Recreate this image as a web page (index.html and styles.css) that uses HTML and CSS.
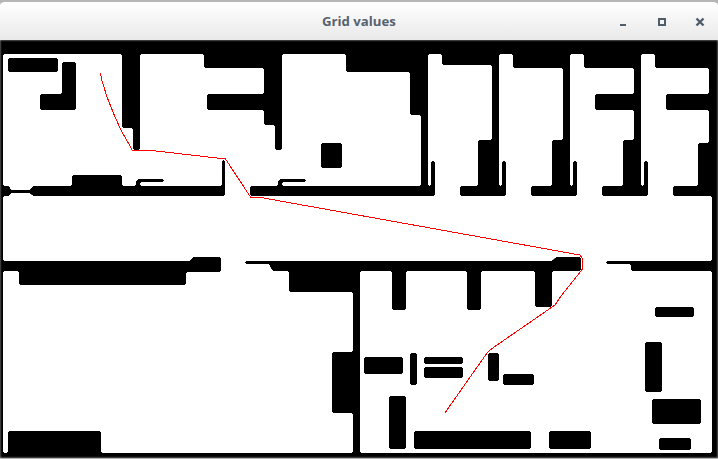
FILE: index.html
```html
<!DOCTYPE html>
<html lang="en">
<head>
<meta charset="utf-8">
<title>Grid values</title>
<link rel="stylesheet" href="styles.css">
</head>
<body>
<main class="window">
  <header class="titlebar">
    <div class="title">Grid values</div>
    <div class="controls">
      <svg class="control" viewBox="0 0 12 12" aria-label="Minimize"><rect x="2" y="8" width="6" height="2"/></svg>
      <svg class="control" viewBox="0 0 12 12" aria-label="Maximize"><path fill-rule="evenodd" d="M2 2h8v8H2zM4 4v4h4V4z"/></svg>
      <svg class="control" viewBox="0 0 12 12" aria-label="Close"><path class="x" d="M2.5 2.5l7 7M9.5 2.5l-7 7"/></svg>
    </div>
  </header>
  <svg class="map" viewBox="0 40 718 418" aria-label="Occupancy grid with path">
    <defs>
      <filter id="soften" x="0" y="0" width="100%" height="100%" color-interpolation-filters="sRGB">
        <feGaussianBlur stdDeviation="1"/>
        <feComponentTransfer>
          <feFuncR type="linear" slope="12" intercept="-5.5"/>
          <feFuncG type="linear" slope="12" intercept="-5.5"/>
          <feFuncB type="linear" slope="12" intercept="-5.5"/>
        </feComponentTransfer>
      </filter>
    </defs>
    <g filter="url(#soften)">
      <rect class="wall" x="0" y="40" width="718" height="418"/>
      <!-- free space -->
      <path class="free" d="M3 54H122V128H133V150H140V54H204V68H264V94H207V110H264V125H275V150H282V54H346V72H410V115H421V186H250V196H225V160H222V186H3Z"/>
      <path class="free" d="M9 186H33L30 190H11ZM11 193H30L33 196H9Z"/>
      <rect class="free" x="3" y="196" width="709" height="65"/>
      <path class="free" d="M428 54H442V65H492V140H478V186H460V196H435V161H431V186H428Z"/>
      <path class="free" d="M499 54H513V68H563V140H552V186H531V196H506V161H502V186H499Z"/>
      <path class="free" d="M570 54H584V68H634V94H595V110H634V140H623V186H602V196H577V161H573V186H570Z"/>
      <path class="free" d="M641 54H655V68H709V94H666V110H709V143H698V186H673V196H648V161H644V186H641Z"/>
      <path class="free" d="M3 271H221V261H245V264H270V268H272V271H289V292H353V352H332V413H353V453H101V431H8V453H3Z"/>
      <path class="free" d="M360 271H581V261H606V264H631V271H712V453H360Z"/>
      <!-- obstacles -->
      <path class="wall" d="M8 58H58V72H8ZM62 62H76V110H40V94H62Z"/>
      <path class="wall" d="M3 186H8L10 191L8 196H3ZM10 190H31V193H10Z"/>
      <rect class="wall" x="72" y="175" width="50" height="12"/>
      <path class="wall" d="M136 186V181L138 179H164V182H140V186Z"/>
      <path class="wall" d="M278 186V181L280 179H306V182H282V186Z"/>
      <rect class="wall" x="321" y="143" width="21" height="25"/>
      <rect class="wall" x="19" y="270" width="167" height="15"/>
      <path class="wall" d="M186 261H190L193 257H221V272H186Z"/>
      <rect class="wall" x="8" y="431" width="93" height="22"/>
      <rect class="wall" x="392" y="270" width="14" height="40"/>
      <rect class="wall" x="467" y="270" width="14" height="40"/>
      <rect class="wall" x="535" y="270" width="17" height="37"/>
      <path class="wall" d="M552 261L556 257H581V271H552Z"/>
      <rect class="wall" x="364" y="357" width="39" height="17"/>
      <rect class="wall" x="410" y="353" width="7" height="32"/>
      <rect class="wall" x="424" y="357" width="39" height="7"/>
      <rect class="wall" x="424" y="367" width="39" height="11"/>
      <rect class="wall" x="488" y="353" width="11" height="28"/>
      <rect class="wall" x="503" y="374" width="31" height="11"/>
      <rect class="wall" x="389" y="396" width="17" height="53"/>
      <rect class="wall" x="414" y="431" width="117" height="18"/>
      <rect class="wall" x="549" y="431" width="42" height="18"/>
      <rect class="wall" x="655" y="307" width="39" height="10"/>
      <rect class="wall" x="645" y="342" width="17" height="50"/>
      <rect class="wall" x="652" y="399" width="49" height="25"/>
      <rect class="wall" x="659" y="438" width="32" height="12"/>
    </g>
    <polyline class="route" points="100.5,73 101.5,79 107,97 115,117 122,132 132.5,150.5 136,151 152,150.5 225.5,159 250.5,197 258,197 580,255 582.5,259 582.5,269 581,271 561,296 555,305 492,348.5 487,353 444.5,413.5"/>
  </svg>
</main>
</body>
</html>
```
FILE: styles.css
```css
html, body {
  margin: 0;
  padding: 0;
  background: #b4b4b4;
}

.window {
  display: flex;
  flex-direction: column;
  width: 718px;
  height: 458px;
  overflow: hidden;
}

.titlebar {
  position: relative;
  display: flex;
  align-items: center;
  justify-content: flex-end;
  box-sizing: border-box;
  height: 40px;
  flex: none;
  border-top: 2px solid #b6b6b6;
  border-radius: 5px 5px 0 0;
  background: linear-gradient(#ffffff, #e9e9e9);
}

.title {
  position: absolute;
  left: 322px;
  top: 10px;
  font: bold 13.2px/18px "Open Sans", sans-serif;
  color: #56636f;
  white-space: nowrap;
}

.controls {
  display: flex;
  gap: 26px;
  padding: 2px 12px 0 0;
}

.control {
  width: 12px;
  height: 12px;
  fill: #4f5d69;
}

.x {
  fill: none;
  stroke: #4f5d69;
  stroke-width: 2.4;
}

.map {
  display: block;
  width: 718px;
  height: 418px;
  flex: none;
}

.wall { fill: #000; }
.free { fill: #fff; }

.route {
  fill: none;
  stroke: #ff0000;
  stroke-width: 1;
  shape-rendering: crispEdges;
}
```
